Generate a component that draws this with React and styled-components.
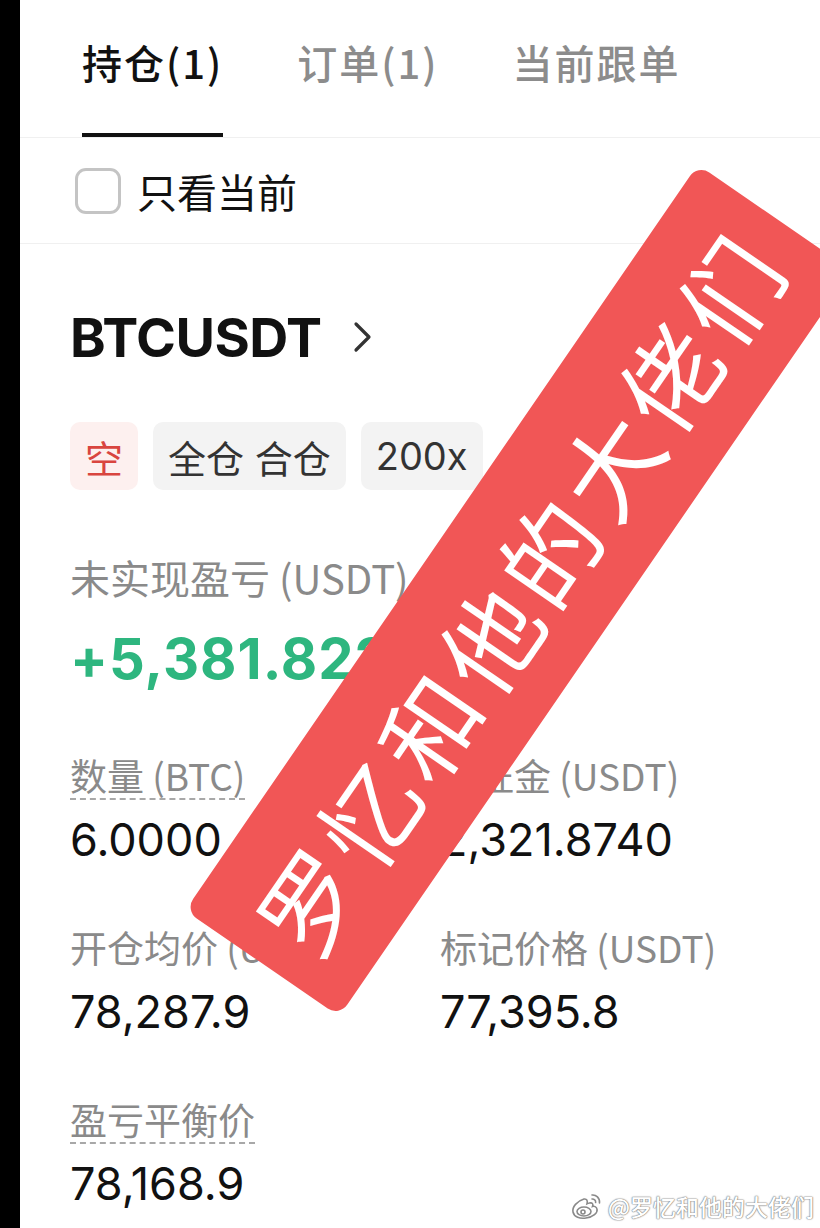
import styled, { createGlobalStyle } from "styled-components";

const GlobalStyle = createGlobalStyle`
  html, body {
    margin: 0;
    padding: 0;
    background: #ffffff;
  }
  body {
    font-family: "Inter", "Noto Sans CJK SC", sans-serif;
    -webkit-font-smoothing: antialiased;
  }
`;

const Screen = styled.div`
  position: relative;
  width: 820px;
  height: 1228px;
  display: flex;
  overflow: hidden;
  background: #ffffff;
`;

const Edge = styled.div`
  width: 20px;
  flex-shrink: 0;
  background: #000000;
`;

const Page = styled.div`
  flex: 1;
  display: flex;
  flex-direction: column;
`;

const Tabs = styled.div`
  display: flex;
  gap: 74px;
  padding: 0 0 0 62px;
  height: 137px;
  border-bottom: 1px solid #f0f0f0;
`;

const Tab = styled.div`
  display: flex;
  align-items: flex-start;
  height: 100%;
  box-sizing: border-box;
  padding-top: 32px;
  font-family: "Noto Sans CJK SC", sans-serif;
  font-size: 40px;
  line-height: 60px;
  letter-spacing: 2px;
  font-weight: 500;
  color: ${(p) => (p.active ? "#111111" : "#8c8c8c")};
  border-bottom: 4px solid ${(p) => (p.active ? "#111111" : "transparent")};
  margin-bottom: -1px;
`;

const FilterRow = styled.div`
  display: flex;
  align-items: center;
  gap: 16px;
  height: 105px;
  padding-left: 55px;
  border-bottom: 1px solid #f0f0f0;
`;

const Checkbox = styled.span`
  width: 46px;
  height: 46px;
  box-sizing: border-box;
  border: 3px solid #c4c4c4;
  border-radius: 11px;
`;

const FilterText = styled.span`
  font-family: "Noto Sans CJK SC", sans-serif;
  font-size: 40px;
  color: #111111;
`;

const Position = styled.div`
  display: flex;
  flex-direction: column;
  padding: 58px 0 0 50px;
`;

const SymbolRow = styled.div`
  display: flex;
  align-items: center;
  gap: 30px;
  height: 70px;
`;

const Symbol = styled.span`
  font-family: "Inter", sans-serif;
  font-size: 54px;
  font-weight: 700;
  color: #111111;
  letter-spacing: -0.5px;
`;

const Tags = styled.div`
  display: flex;
  gap: 15px;
  margin-top: 50px;
`;

const Tag = styled.span`
  display: inline-flex;
  align-items: center;
  height: 68px;
  padding: 0 15px;
  border-radius: 10px;
  font-family: "Inter", "Noto Sans CJK SC", sans-serif;
  font-size: 38px;
  background: ${(p) => (p.short ? "#fdf0ef" : "#f3f3f3")};
  color: ${(p) => (p.short ? "#d9453f" : "#333333")};
`;

const Label = styled.span`
  align-self: flex-start;
  font-family: "Noto Sans CJK SC", sans-serif;
  font-size: ${(p) => (p.large ? 40 : 37)}px;
  line-height: 46px;
  color: #8a8a8a;
  border-bottom: 2px dashed ${(p) => (p.dashed ? "#a8a8a8" : "transparent")};
`;

const PnlBlock = styled.div`
  display: flex;
  flex-direction: column;
  margin-top: 64px;
  gap: 22px;
`;

const Pnl = styled.span`
  font-family: "Inter", sans-serif;
  font-size: 56px;
  line-height: 70px;
  font-weight: 700;
  color: #2eb67f;
  letter-spacing: 1px;
`;

const Grid = styled.div`
  display: grid;
  grid-template-columns: 370px 1fr;
  row-gap: 58px;
  margin-top: 58px;
`;

const Cell = styled.div`
  display: flex;
  flex-direction: column;
  gap: 14px;
`;

const Value = styled.span`
  font-family: "Inter", sans-serif;
  font-size: 45px;
  line-height: 52px;
  color: #111111;
`;

const Banner = styled.div`
  position: absolute;
  left: 66px;
  top: 497px;
  width: 905px;
  height: 187px;
  display: flex;
  align-items: center;
  justify-content: center;
  background: #f15656;
  border-radius: 14px;
  transform: rotate(-55.5deg);
  color: #ffffff;
  font-family: "Noto Sans CJK SC", sans-serif;
  font-size: 98px;
  font-weight: 400;
  letter-spacing: 8px;
  white-space: nowrap;
`;

const Watermark = styled.div`
  position: absolute;
  right: 6px;
  bottom: 5px;
  display: flex;
  align-items: center;
  gap: 5px;
  font-family: "Noto Sans CJK SC", sans-serif;
  font-size: 23px;
  font-weight: 500;
  color: #ffffff;
  text-shadow: 0 0 1px #7a7a7a, 0 0 1px #7a7a7a, 0 0 2px #9a9a9a;
`;

const Chevron = () => (
  <svg width="22" height="34" viewBox="0 0 22 34" fill="none">
    <path d="M4 4 L17 17 L4 30" stroke="#333" strokeWidth="3.2" strokeLinecap="round" strokeLinejoin="round" />
  </svg>
);

const WeiboLogo = () => (
  <svg width="32" height="28" viewBox="0 0 32 28" fill="none" stroke="#8a8a8a" strokeWidth="1.6">
    <path
      d="M13 7 C6 9 1 15 2 20 C3 25 9 27 15 26 C22 25 27 21 26 17 C25.5 14.5 23 14 21.5 14.5 C22.5 12 21.5 10.5 18.5 11 C17 11.3 16 11.8 16 11.8 C16.8 9 16 6.5 13 7 Z"
      fill="#ffffff"
    />
    <ellipse cx="13" cy="19.5" rx="7" ry="4.5" fill="#ffffff" />
    <circle cx="12" cy="20" r="2" fill="#ffffff" />
    <path d="M21 3 C25 2.5 29 6 28.5 11" strokeLinecap="round" />
    <path d="M21 7 C23 6.8 25 8.5 24.6 10.5" strokeLinecap="round" />
  </svg>
);

const stats = [
  { label: "数量 (BTC)", value: "6.0000", dashed: true },
  { label: "保证金 (USDT)", value: "2,321.8740" },
  { label: "开仓均价 (USDT)", value: "78,287.9" },
  { label: "标记价格 (USDT)", value: "77,395.8" },
  { label: "盈亏平衡价", value: "78,168.9", dashed: true },
];

const App = () => {
  return (
    <>
      <GlobalStyle />
      <Screen>
        <Edge />
        <Page>
          <Tabs>
            <Tab active>持仓(1)</Tab>
            <Tab>订单(1)</Tab>
            <Tab>当前跟单</Tab>
          </Tabs>
          <FilterRow>
            <Checkbox />
            <FilterText>只看当前</FilterText>
          </FilterRow>
          <Position>
            <SymbolRow>
              <Symbol>BTCUSDT</Symbol>
              <Chevron />
            </SymbolRow>
            <Tags>
              <Tag short>空</Tag>
              <Tag>全仓 合仓</Tag>
              <Tag>200x</Tag>
            </Tags>
            <PnlBlock>
              <Label large>未实现盈亏 (USDT)</Label>
              <Pnl>+5,381.8227</Pnl>
            </PnlBlock>
            <Grid>
              {stats.map((s) => (
                <Cell key={s.label}>
                  <Label dashed={s.dashed}>{s.label}</Label>
                  <Value>{s.value}</Value>
                </Cell>
              ))}
            </Grid>
          </Position>
        </Page>
        <Banner>罗忆和他的大佬们</Banner>
        <Watermark>
          <WeiboLogo />
          <span>@罗忆和他的大佬们</span>
        </Watermark>
      </Screen>
    </>
  );
};

export default App;
